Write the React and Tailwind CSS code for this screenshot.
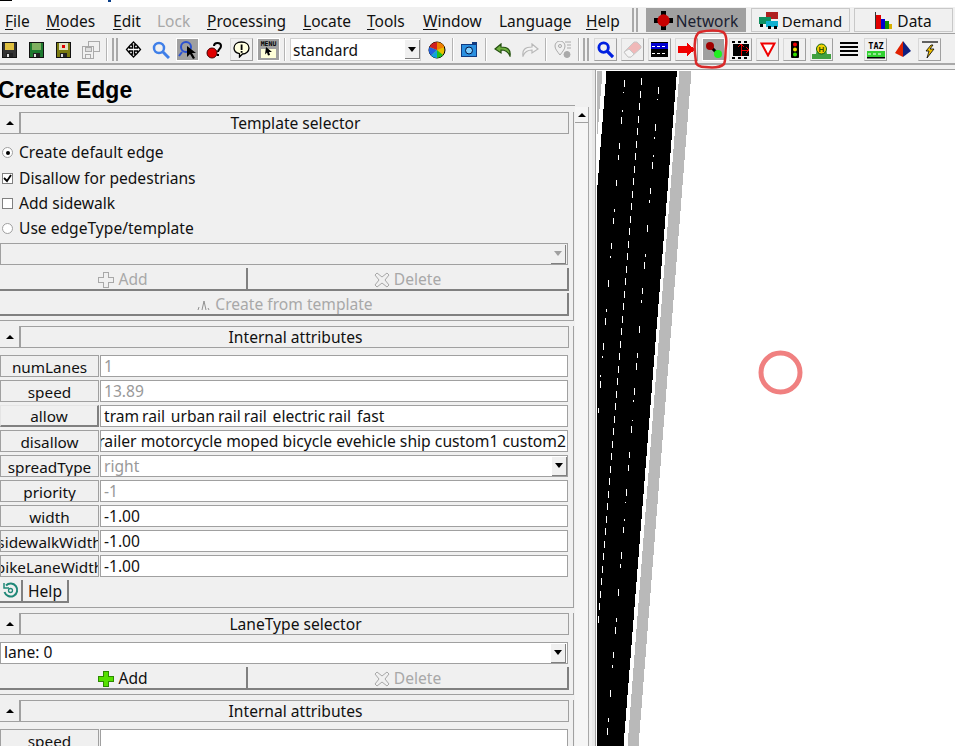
const FONT = "font-['Noto_Sans',sans-serif]";

const menus = [
  { pre: "", key: "F", post: "ile", cls: "ml-[5px] w-[41px]" },
  { pre: "", key: "M", post: "odes", cls: "w-[67px]" },
  { pre: "", key: "E", post: "dit", cls: "w-[44px]" },
  { pre: "Lock", key: "", post: "", cls: "w-[50px] text-[#a8a8a8]" },
  { pre: "", key: "P", post: "rocessing", cls: "w-[96px]" },
  { pre: "", key: "L", post: "ocate", cls: "w-[64px]" },
  { pre: "", key: "T", post: "ools", cls: "w-[56px]" },
  { pre: "", key: "W", post: "indow", cls: "w-[76px]" },
  { pre: "Langua", key: "g", post: "e", cls: "w-[87px]" },
  { pre: "", key: "H", post: "elp", cls: "w-[40px]" },
];

// white lane markings, [y, length]
const lane1 = [[80,7],[92,1],[110,2],[117,7],[143,6],[155,5],[180,6],[209,3],[218,6],[243,6],[256,2],[280,7],[309,3],[318,7],[343,7],[356,2],[375,2],[381,7],[408,5]];
const lane2 = Array.from({ length: 44 }, (_, i) => [78 + i * 12.5, 7]);
const lane3 = [[87,7],[99,1],[124,7],[137,2],[155,2],[162,7],[188,6],[200,3],[225,7],[254,3],[262,7],[288,6],[300,3],[326,7],[353,5],[363,7],[388,7],[400,2],[420,1],[426,7],[452,6],[465,6],[489,7],[502,1],[519,2],[527,6],[552,7],[564,4],[589,7],[618,4],[627,7],[652,6],[665,3],[690,7],[718,4],[728,7]];

function Dashes({ list, x0 }) {
  return list.map(([y, len]) => {
    const x = x0 - 0.08 * (y - 120);
    return x > 597 ? <rect key={y} x={Math.round(x)} y={y} width="1" height={len} fill="#fff" /> : null;
  });
}

function Floppy({ body, label, mark }) {
  return (
    <svg width="15" height="16" viewBox="0 0 15 16" shapeRendering="crispEdges">
      <rect x="0" y="0" width="15" height="16" fill="#111" />
      <rect x="1" y="1" width="13" height="14" fill={body} />
      <rect x="3" y="1" width="9" height="7" fill={label} />
      <rect x="4" y="11" width="7" height="4" fill="#222" />
      <rect x="5" y="12" width="2" height="3" fill="#ddd" />
      {mark && <rect x="6" y="3" width="3" height="3" fill={mark} />}
    </svg>
  );
}

function GreyFloppies() {
  return (
    <svg width="18" height="18" viewBox="0 0 18 18" shapeRendering="crispEdges" fill="none" stroke="#aaa">
      <rect x="6.5" y="0.5" width="11" height="10" fill="#f0f0f0" />
      <rect x="0.5" y="5.5" width="11" height="12" fill="#f0f0f0" />
      <rect x="3" y="6" width="6" height="4" fill="#ddd" />
      <rect x="3" y="13" width="5" height="4" />
    </svg>
  );
}

function Lens({ size = 18, color = "#3f7fe8", width = 2.5 }) {
  return (
    <svg width={size} height={size} viewBox="0 0 18 18" fill="none">
      <circle cx="7" cy="7" r="5" stroke={color} strokeWidth={width} />
      <path d="M11 11l6 6" stroke={color} strokeWidth={width + 0.5} />
    </svg>
  );
}

function PlusIcon({ on }) {
  return (
    <svg width="16" height="16" viewBox="0 0 16 16" shapeRendering="crispEdges">
      <path d="M5.5.5h5v5h5v5h-5v5h-5v-5h-5v-5h5z" fill={on ? "#55e000" : "#f0f0f0"} stroke={on ? "#2c8a00" : "#a8a8a8"} />
    </svg>
  );
}

function CrossIcon() {
  return (
    <svg width="16" height="16" viewBox="0 0 16 16">
      <path d="M3 1l5 4 5-4 2 2-4 5 4 5-2 2-5-4-5 4-2-2 4-5-4-5z" fill="#f0f0f0" stroke="#a8a8a8" />
    </svg>
  );
}

function Tool({ kind, cls = "", children }) {
  const look =
    kind === "raised"
      ? "border border-[#d8d8d8] border-r-[#a0a0a0] border-b-[#a0a0a0] bg-[#f0f0f0]"
      : kind === "active"
        ? "bg-[#a0a0a0] border border-white"
        : "";
  return <div className={`w-[23px] h-[23px] shrink-0 flex items-center justify-center ${look} ${cls}`}>{children}</div>;
}

function Sep({ cls = "" }) {
  return <div className={`w-[2px] h-[23px] shrink-0 bg-[#b4b4b4] border-r border-white ${cls}`} />;
}

function Grip({ cls = "" }) {
  return (
    <div className={`w-[6px] h-[23px] shrink-0 flex justify-between ${cls}`}>
      <div className="w-[2px] border-x border-[#a8a8a8]" />
      <div className="w-[2px] border-x border-[#a8a8a8]" />
    </div>
  );
}

function Tab({ active, cls, children }) {
  return (
    <div className={`h-[24px] flex items-center justify-center gap-[3px] shrink-0 border ${active ? "bg-[#a0a0a0] border-[#a0a0a0]" : "bg-[#f0f0f0] border-[#c8c8c8]"} ${cls}`}>
      {children}
    </div>
  );
}

function Section({ title, children }) {
  return (
    <div className="mt-[5px] w-[574px] border-r border-b border-[#a0a0a0]">
      <div className="flex h-[22px]">
        <div className="w-[19px] border-b border-[#a0a0a0] flex items-center justify-center">
          <div className="w-0 h-0 border-x-[4px] border-x-transparent border-b-[4px] border-b-black" />
        </div>
        <div className="w-[550px] pt-[2px] pl-[2px] border border-l-2 border-[#a0a0a0] flex items-center justify-center text-[15.6px]">{title}</div>
      </div>
      {children}
    </div>
  );
}

function Attr({ name, value, grey, raised, alignEnd, combo, tight }) {
  return (
    <div className="flex h-[22px] mb-[3px]">
      <div className={`w-[99px] pt-[2px] overflow-hidden flex items-center justify-center whitespace-nowrap text-[15.3px] shrink-0 ${raised ? "border-t border-l border-[#e4e4e4] border-r-2 border-b-2 border-r-[#808080] border-b-[#808080]" : "border border-[#a0a0a0]"}`}>
        <span className="shrink-0">{name}</span>
      </div>
      <div className={`ml-[1px] w-[468px] bg-white border border-[#a0a0a0] flex items-center overflow-hidden whitespace-pre pl-[3px] ${alignEnd ? "justify-end pr-[1px] text-[15.7px]" : "text-[15.6px]"} ${tight ? "[word-spacing:-1.1px]" : ""} ${grey ? "text-[#999]" : ""}`}>
        <span className="shrink-0 pt-[2px]">{value}</span>
        {combo && <ComboArrow cls="ml-auto" />}
      </div>
    </div>
  );
}

function ComboArrow({ off, cls = "" }) {
  return (
    <div className={`w-[15px] h-[19px] shrink-0 bg-[#f0f0f0] border-r border-b border-[#808080] flex items-center justify-center ${cls}`}>
      <div className={`w-0 h-0 border-x-[4px] border-x-transparent border-t-[5px] ${off ? "border-t-[#a0a0a0]" : "border-t-black"}`} />
    </div>
  );
}

function ActionBtn({ cls = "", children }) {
  return (
    <div className={`h-[23px] pt-[2px] flex items-center justify-center gap-[4px] border-r-2 border-b-2 border-[#808080] text-[15.6px] ${cls}`}>{children}</div>
  );
}

export default function App() {
  return (
    <div className={`relative w-[955px] h-[746px] overflow-hidden bg-[#f0f0f0] flex flex-col text-[#111] ${FONT}`}>
      {/* clipped top of the window */}
      <div className="h-[7px] bg-white shrink-0 flex">
        <div className="w-[12px] h-[1px] bg-black" />
        <div className="ml-[96px] w-[3px] h-[2px] bg-[#0a3f8a]" />
      </div>

      {/* menu bar */}
      <div className="h-[27px] shrink-0 flex items-center border-b border-[#a0a0a0] text-[15.5px]">
        {menus.map((m) => (
          <div key={m.pre + m.key + m.post} className={`shrink-0 pt-[3px] ${m.cls}`}>
            {m.pre}
            <span className="underline underline-offset-2">{m.key}</span>
            {m.post}
          </div>
        ))}
        <Grip cls="ml-[6px] h-[24px]" />
        <Tab active cls="ml-[8px] w-[100px]">
          <svg width="19" height="19" viewBox="0 0 17 17" shapeRendering="crispEdges">
            <rect x="6" y="0" width="5" height="17" fill="#000" />
            <rect x="0" y="6" width="17" height="5" fill="#000" />
            <circle cx="8.5" cy="8.5" r="5.5" fill="#c80000" shapeRendering="auto" />
          </svg>
          <span className="text-[15.5px] pt-[3px] text-[#1a2030]">Network</span>
        </Tab>
        <Tab cls="ml-[5px] w-[99px]">
          <svg width="20" height="17" viewBox="0 0 20 17" shapeRendering="crispEdges">
            <rect x="7" y="0" width="12" height="7" fill="#b02020" />
            <rect x="0" y="5" width="12" height="7" fill="#109060" />
            <rect x="7" y="9" width="12" height="6" fill="#10b0d0" />
            <rect x="1" y="12" width="3" height="3" fill="#000" />
            <rect x="9" y="14" width="3" height="3" fill="#000" />
            <rect x="15" y="14" width="3" height="3" fill="#000" />
          </svg>
          <span className="text-[15px] pt-[3px]">Demand</span>
        </Tab>
        <Tab cls="ml-[4px] w-[99px]">
          <svg width="17" height="17" viewBox="0 0 17 17" shapeRendering="crispEdges">
            <rect x="0" y="0" width="1" height="17" fill="#333" />
            <rect x="1" y="3" width="5" height="14" fill="#e00000" />
            <rect x="6" y="7" width="4" height="10" fill="#0000d0" />
            <rect x="10" y="9" width="4" height="8" fill="#109000" />
            <rect x="14" y="12" width="3" height="5" fill="#d8b000" />
          </svg>
          <span className="text-[15.5px] pt-[3px] ml-[2px]">Data</span>
        </Tab>
      </div>

      {/* toolbar */}
      <div className="h-[31px] pt-[2px] shrink-0 flex items-center gap-[4px] -ml-[2px] border-b-2 border-[#a8a8a8] w-[957px]">
        <Tool><Floppy body="#333" label="#e0c040" /></Tool>
        <Tool><Floppy body="#1e7a30" label="#7fb060" /></Tool>
        <Tool><Floppy body="#7a7a10" label="#e0e0c0" mark="#e00000" /></Tool>
        <Tool><GreyFloppies /></Tool>
        <Sep />
        <Grip />
        <Tool>
          <svg width="17" height="17" viewBox="0 0 17 17">
            <path d="M8.5 1l3 3h-2v3h3v-2l3 3.5-3 3.500v-2h-3v3h2l-3 3-3-3h2v-3h-3v2l-3-3.500 3-3.500v2h3v-3h-2z" fill="#fff" stroke="#000" strokeWidth="1.300" />
          </svg>
        </Tool>
        <Tool><Lens /></Tool>
        <Tool kind="active">
          <svg width="20" height="20" viewBox="0 0 20 20" fill="none">
            <circle cx="8" cy="7" r="5" stroke="#2a50d0" strokeWidth="2" />
            <path d="M4 12l-3 4" stroke="#2a50d0" strokeWidth="2" />
            <path d="M9 6l9 7h-4l3 5-2 1-3-5-3 3z" fill="#000" />
          </svg>
        </Tool>
        <Tool>
          <svg width="18" height="18" viewBox="0 0 18 18">
            <circle cx="6" cy="12" r="5" fill="#e00000" stroke="#400" />
            <path d="M8 5c0-4 7-4 7 0 0 3-3 3-3 6" fill="none" stroke="#000" strokeWidth="2" />
            <rect x="11" y="13" width="2" height="2" fill="#000" />
          </svg>
        </Tool>
        <Tool kind="raised">
          <svg width="17" height="17" viewBox="0 0 17 17">
            <path d="M8.5 1c4.500 0 7.500 2.500 7.500 6s-3 6-6.500 6l-3 3v-3.300C3 12 1 10 1 7c0-3.500 3-6 7.500-6z" fill="#ffffe0" stroke="#000" strokeWidth="1.300" />
            <rect x="7.700" y="3.500" width="1.800" height="5.500" fill="#000" />
            <rect x="7.700" y="10" width="1.800" height="1.800" fill="#000" />
          </svg>
        </Tool>
        <Tool kind="active">
          <svg width="21" height="21" viewBox="0 0 21 21">
            <rect x="3" y="10" width="15" height="9" fill="#ffffd8" />
            <text x="10.500" y="7" textAnchor="middle" fontSize="6.500" fontWeight="700" fontFamily="'DejaVu Sans Mono',monospace" fill="#000">MENU</text>
            <path d="M8 8l6 5h-3l1 3-2 .5-1-3-2 2z" fill="#000" />
          </svg>
        </Tool>
        <Sep />
        <div className="w-[131px] h-[23px] shrink-0 bg-white border border-[#d0d0d0] flex items-center pl-[2px] text-[15.5px]">
          <span className="pt-[2px]">standard</span>
          <ComboArrow cls="ml-auto" />
        </div>
        <Tool>
          <svg width="18" height="18" viewBox="0 0 18 18">
            <circle cx="9" cy="9" r="8" fill="#e8c000" stroke="#000" />
            <path d="M9 9V1.200A8 8 0 0 0 1.500 6z" fill="#d02020" />
            <path d="M9 9V1.200A8 8 0 0 1 16.500 6z" fill="#f08000" />
            <path d="M9 9L1.500 6A8 8 0 0 0 3 14.500z" fill="#2060e0" />
            <path d="M9 9l-6 5.500A8 8 0 0 0 9 17z" fill="#10a0e0" />
            <path d="M9 9v8a8 8 0 0 0 6-3z" fill="#20c020" />
          </svg>
        </Tool>
        <Sep />
        <Tool>
          <svg width="17" height="15" viewBox="0 0 17 15" shapeRendering="crispEdges">
            <rect x="0" y="2" width="16" height="13" fill="#103a80" />
            <rect x="1" y="3" width="14" height="11" fill="#2a90e0" />
            <rect x="11" y="0" width="5" height="3" fill="#103a80" />
            <circle cx="8" cy="8.500" r="3.500" fill="#80d0ff" stroke="#001040" shapeRendering="auto" />
          </svg>
        </Tool>
        <Sep />
        <Tool>
          <svg width="18" height="14" viewBox="0 0 18 14">
            <path d="M7 1L1 6l6 4V7c4 0 7 1 9 6 1-6-2-9-9-9z" fill="#70b040" stroke="#245010" strokeWidth="1.200" />
          </svg>
        </Tool>
        <Tool>
          <svg width="18" height="14" viewBox="0 0 18 14">
            <path d="M11 1l6 5-6 4V7c-4 0-7 1-9 6-1-6 2-9 9-9z" fill="#f4f4f4" stroke="#b8b8b8" strokeWidth="1.200" />
          </svg>
        </Tool>
        <Sep />
        <Tool>
          <svg width="18" height="18" viewBox="0 0 18 18" fill="none" stroke="#aaa">
            <path d="M6 14C3 10 1 8 1 5a5 5 0 0 1 10 0c0 3-2 5-5 9z" />
            <circle cx="6" cy="5" r="1.500" />
            <path d="M11 1h6M13 4h4M13 7h4" />
            <circle cx="13" cy="13.500" r="3" fill="#aaa" />
          </svg>
        </Tool>
        <Sep />
        <Grip cls="-ml-[1px]" />
        <Tool kind="raised" cls="ml-[1px]"><Lens size={17} color="#0020e0" width={3} /></Tool>
        <Tool kind="raised">
          <svg width="19" height="17" viewBox="0 0 19 17">
            <path d="M1 11L11 1h3l4 4v2L8 16H5z" fill="#f0b8b8" stroke="#c8c8c8" />
            <path d="M1 11l4 5h3l3-3-5-5z" fill="#f4f4f4" stroke="#c8c8c8" />
          </svg>
        </Tool>
        <Tool kind="raised">
          <svg width="17" height="15" viewBox="0 0 17 15" shapeRendering="crispEdges">
            <rect width="17" height="15" fill="#000" />
            <rect y="1" width="17" height="6" fill="#0000d0" />
            <path d="M1 4h3M6 4h3M11 4h3M1 11h3M6 11h3M11 11h3" stroke="#fff" />
          </svg>
        </Tool>
        <Tool kind="raised">
          <svg width="17" height="13" viewBox="0 0 17 13" shapeRendering="crispEdges">
            <path d="M0 3h9V0l8 6.500L9 13v-3H0z" fill="#f00000" />
          </svg>
        </Tool>
        <Tool kind="active">
          <svg width="20" height="20" viewBox="0 0 20 20">
            <path d="M6 6l8 8" stroke="#000" strokeWidth="3" />
            <circle cx="6" cy="6" r="4" fill="#a00000" />
            <circle cx="14" cy="14" r="4" fill="#20f020" />
          </svg>
        </Tool>
        <Tool kind="raised">
          <svg width="18" height="18" viewBox="0 0 18 18" shapeRendering="crispEdges">
            <rect x="1" y="3" width="16" height="12" fill="#000" />
            <path d="M0 1h3M6 1h3M12 1h3M0 17h3M6 17h3M12 17h3" stroke="#000" strokeWidth="2" />
            <path d="M9 3v12M9 9h8M6 6l3-3 3 3M14 6l3 3-3 3" stroke="#f00000" fill="none" />
          </svg>
        </Tool>
        <Tool kind="raised">
          <svg width="16" height="15" viewBox="0 0 16 15">
            <path d="M1.500 1.500h13L8 13.500z" fill="#fff" stroke="#f00000" strokeWidth="2" />
          </svg>
        </Tool>
        <Tool kind="raised">
          <svg width="8" height="17" viewBox="0 0 8 17">
            <rect width="8" height="17" rx="1" fill="#000" />
            <circle cx="4" cy="3.500" r="2" fill="#f00000" />
            <circle cx="4" cy="8.500" r="2" fill="#f0e000" />
            <circle cx="4" cy="13.500" r="2" fill="#30e000" />
          </svg>
        </Tool>
        <Tool kind="raised">
          <svg width="19" height="18" viewBox="0 0 19 18">
            <path d="M0 18v-5h4a5.500 5.500 0 1 1 11 0h4v5z" fill="#40a040" />
            <circle cx="9.500" cy="8" r="5" fill="#f0d000" stroke="#106010" />
            <text x="9.500" y="11" textAnchor="middle" fontSize="8" fontWeight="700" fontFamily="'Liberation Sans',sans-serif" fill="#305000">H</text>
          </svg>
        </Tool>
        <Tool>
          <svg width="18" height="16" viewBox="0 0 18 16" shapeRendering="crispEdges">
            <path d="M0 1h18M0 5h18M0 9h18M0 13h18" stroke="#000" strokeWidth="2" />
          </svg>
        </Tool>
        <Tool kind="raised">
          <svg width="18" height="18" viewBox="0 0 18 18">
            <text x="9" y="7.500" textAnchor="middle" fontSize="8.500" fontWeight="700" fontFamily="'DejaVu Sans Mono',monospace" fill="#000">TAZ</text>
            <rect y="10" width="18" height="6" fill="#30d030" />
            <path d="M1 13h3M6 13h3M11 13h3" stroke="#fff" />
            <rect y="16" width="18" height="1.500" fill="#000" />
          </svg>
        </Tool>
        <Tool>
          <svg width="16" height="18" viewBox="0 0 16 18">
            <path d="M8 0l8 10-8 6z" fill="#102080" />
            <path d="M8 0L0 12l8 4z" fill="#e02000" />
          </svg>
        </Tool>
        <Tool kind="raised">
          <svg width="16" height="18" viewBox="0 0 16 18">
            <path d="M0 1h16" stroke="#000" strokeWidth="1.200" />
            <path d="M9 4L4 10h3l-2 7 7-9H8l3-4z" fill="#f0c000" stroke="#000" strokeWidth="0.800" />
          </svg>
        </Tool>
      </div>

      <div className="h-[4px] shrink-0" />

      {/* main area */}
      <div className="flex-1 min-h-0 flex border-t border-[#a0a0a0]">
        <div className="w-[596px] shrink-0 flex border-r border-[#a0a0a0] overflow-hidden">
          {/* frame column */}
          <div className="w-[575px] shrink-0">
            <div className="h-[36px] pt-[5px] border-b border-[#a0a0a0] flex items-center -ml-[2px] w-[577px] font-['Liberation_Sans',sans-serif] font-bold text-[23px] text-black">
              Create Edge
            </div>
            <div className="h-[1px]" />

            <Section title="Template selector">
              <div className="pt-[7px] text-[15.6px]">
                <div className="h-[25px] pb-[2px] flex items-center">
                  <div className="w-[11px] h-[11px] ml-[2px] mr-[6px] rounded-full bg-white border border-[#a0a0a0] flex items-center justify-center">
                    <div className="w-[4px] h-[4px] rounded-full bg-black" />
                  </div>
                  Create default edge
                </div>
                <div className="h-[25px] flex items-center">
                  <div className="w-[11px] h-[11px] ml-[2px] mr-[6px] bg-white border border-[#808080] flex items-center justify-center">
                    <svg width="9" height="9" viewBox="0 0 9 9">
                      <path d="M1 4l3 3 4-6" fill="none" stroke="#000" strokeWidth="1.800" />
                    </svg>
                  </div>
                  Disallow for pedestrians
                </div>
                <div className="h-[25px] flex items-center">
                  <div className="w-[11px] h-[11px] ml-[2px] mr-[6px] bg-white border border-[#808080]" />
                  Add sidewalk
                </div>
                <div className="h-[25px] flex items-center">
                  <div className="w-[11px] h-[11px] ml-[2px] mr-[6px] rounded-full bg-white border border-[#a0a0a0]" />
                  Use edgeType/template
                </div>
              </div>
              <div className="mt-[2px] w-[568px] h-[22px] border border-[#a0a0a0] flex items-center justify-end pr-[1px]">
                <ComboArrow off />
              </div>
              <div className="mt-[3px] flex w-[569px] text-[#a8a8a8]">
                <ActionBtn cls="w-[248px]"><PlusIcon /> Add</ActionBtn>
                <ActionBtn cls="w-[321px]"><CrossIcon /> Delete</ActionBtn>
              </div>
              <ActionBtn cls="mt-[2px] pl-[3px] w-[569px] text-[#a8a8a8] mb-[4px]">
                <svg width="14" height="12" viewBox="0 0 14 12" fill="none" stroke="#909090">
                  <path d="M5 11l2-9M9 11l-2-9M1 11l1-3M12 11l-1-2" />
                </svg>
                Create from template
              </ActionBtn>
            </Section>

            <Section title="Internal attributes">
              <div className="pt-[7px]">
                <Attr name="numLanes" value="1" grey />
                <Attr name="speed" value="13.89" grey />
                <Attr name="allow" value="tram rail  urban rail rail  electric rail  fast" raised tight />
                <Attr name="disallow" value="trailer motorcycle moped bicycle evehicle ship custom1 custom2" alignEnd />
                <Attr name="spreadType" value="right" grey combo />
                <Attr name="priority" value="-1" grey />
                <Attr name="width" value="-1.00" />
                <Attr name="sidewalkWidth" value="-1.00" />
                <Attr name="bikeLaneWidth" value="-1.00" />
              </div>
              <div className="flex h-[24px] mb-[3px] text-[15.6px]">
                <div className="w-[23px] h-[23px] flex items-center justify-center border-r-2 border-b-2 border-[#808080]">
                  <svg width="17" height="17" viewBox="0 0 17 17" fill="none" stroke="#208878" strokeWidth="2">
                    <path d="M4 3.500A6.500 6.500 0 1 1 2.500 10" />
                    <path d="M2 1v5h5" strokeWidth="1.500" />
                    <circle cx="8.500" cy="8.500" r="2" strokeWidth="1.300" />
                  </svg>
                </div>
                <div className="w-[46px] h-[23px] pt-[2px] flex items-center justify-center border-r-2 border-b-2 border-[#808080]">Help</div>
              </div>
            </Section>

            <Section title="LaneType selector">
              <div className="pt-[7px]">
                <div className="w-[568px] h-[22px] bg-white border border-[#a0a0a0] flex items-center pl-[3px] pr-[1px] text-[15.6px]">
                  lane: 0
                  <ComboArrow cls="ml-auto" />
                </div>
              </div>
              <div className="mt-[3px] flex w-[569px] mb-[4px]">
                <ActionBtn cls="w-[248px]"><PlusIcon on /> Add</ActionBtn>
                <ActionBtn cls="w-[321px] text-[#a8a8a8]"><CrossIcon /> Delete</ActionBtn>
              </div>
            </Section>

            <Section title="Internal attributes">
              <div className="pt-[7px]">
                <Attr name="speed" value="" />
              </div>
            </Section>
          </div>

          {/* scrollbar */}
          <div className="w-[14px] shrink-0 mt-[37px] bg-[#f5f5f5] border-r border-[#a8a8a8]">
            <div className="h-[16px] border-b border-[#a0a0a0] flex items-center justify-center">
              <div className="w-0 h-0 border-x-[4px] border-x-transparent border-b-[4px] border-b-black" />
            </div>
          </div>
          <div className="w-[3px] shrink-0" />
          <div className="w-[4px] shrink-0 bg-[#e8e8e8]" />
        </div>

        {/* road canvas */}
        <div className="flex-1 bg-white">
          <svg className="block w-full h-full" viewBox="597 70 358 676">
            <g shapeRendering="crispEdges">
              <polygon points="597,71 603,71 597,147" fill="#b9b9b9" />
              <polygon points="607,71 677.500,71 624,746 597,746 597,198" fill="#000" />
              <polygon points="680,71 692,71 639,746 628,746" fill="#b9b9b9" />
              <Dashes list={lane1} x0={620.7} />
              <Dashes list={lane2} x0={638} />
              <Dashes list={lane3} x0={655.5} />
            </g>
            <circle cx="781" cy="372.500" r="19.500" fill="none" stroke="#f08080" strokeWidth="5" />
          </svg>
        </div>
      </div>

      {/* hand-drawn red mark around the active tool */}
      <svg className="absolute left-[692px] top-[29px]" width="38" height="41" viewBox="0 0 38 41" fill="none">
        <path d="M8 3C16 1 26 1 31 3c3 2 4 6 3 14-1 7 0 14-2 18-3 3-11 4-19 3-5 0-9-2-9-5-1-7-2-13-1-20 0-4 2-9 5-10z" stroke="#d92a2a" strokeWidth="2.500" />
      </svg>
    </div>
  );
}
